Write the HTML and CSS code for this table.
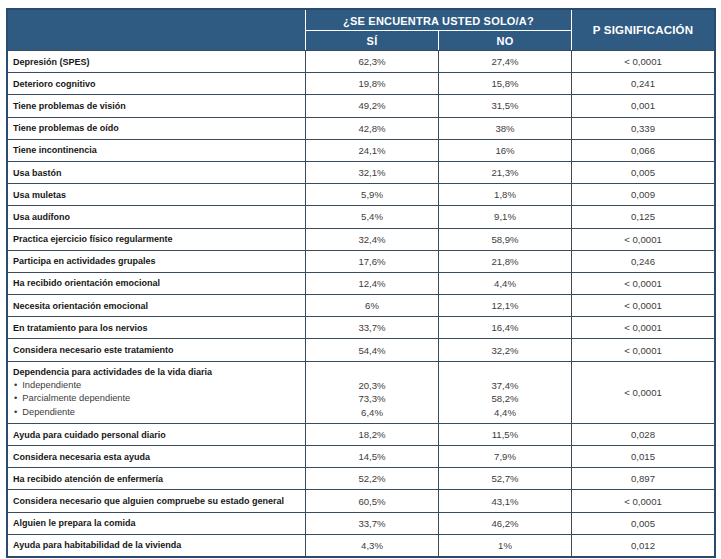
FILE: index.html
```html
<!DOCTYPE html>
<html lang="es">
<head>
<meta charset="utf-8">
<title>¿Se encuentra usted solo/a?</title>
<link rel="stylesheet" href="styles.css">
</head>
<body>
<div class="table">
  <div class="head">
    <div class="h-blank"></div>
    <div class="h-group">¿SE ENCUENTRA USTED SOLO/A?</div>
    <div class="h-p">P SIGNIFICACIÓN</div>
    <div class="h-si">SÍ</div>
    <div class="h-no">NO</div>
  </div>
  <div class="row"><div class="lbl">Depresión (SPES)</div><div class="val">62,3%</div><div class="val">27,4%</div><div class="val">&lt; 0,0001</div></div>
  <div class="row"><div class="lbl">Deterioro cognitivo</div><div class="val">19,8%</div><div class="val">15,8%</div><div class="val">0,241</div></div>
  <div class="row"><div class="lbl">Tiene problemas de visión</div><div class="val">49,2%</div><div class="val">31,5%</div><div class="val">0,001</div></div>
  <div class="row"><div class="lbl">Tiene problemas de oído</div><div class="val">42,8%</div><div class="val">38%</div><div class="val">0,339</div></div>
  <div class="row"><div class="lbl">Tiene incontinencia</div><div class="val">24,1%</div><div class="val">16%</div><div class="val">0,066</div></div>
  <div class="row"><div class="lbl">Usa bastón</div><div class="val">32,1%</div><div class="val">21,3%</div><div class="val">0,005</div></div>
  <div class="row"><div class="lbl">Usa muletas</div><div class="val">5,9%</div><div class="val">1,8%</div><div class="val">0,009</div></div>
  <div class="row"><div class="lbl">Usa audífono</div><div class="val">5,4%</div><div class="val">9,1%</div><div class="val">0,125</div></div>
  <div class="row"><div class="lbl">Practica ejercicio físico regularmente</div><div class="val">32,4%</div><div class="val">58,9%</div><div class="val">&lt; 0,0001</div></div>
  <div class="row"><div class="lbl">Participa en actividades grupales</div><div class="val">17,6%</div><div class="val">21,8%</div><div class="val">0,246</div></div>
  <div class="row"><div class="lbl">Ha recibido orientación emocional</div><div class="val">12,4%</div><div class="val">4,4%</div><div class="val">&lt; 0,0001</div></div>
  <div class="row"><div class="lbl">Necesita orientación emocional</div><div class="val">6%</div><div class="val">12,1%</div><div class="val">&lt; 0,0001</div></div>
  <div class="row"><div class="lbl">En tratamiento para los nervios</div><div class="val">33,7%</div><div class="val">16,4%</div><div class="val">&lt; 0,0001</div></div>
  <div class="row"><div class="lbl">Considera necesario este tratamiento</div><div class="val">54,4%</div><div class="val">32,2%</div><div class="val">&lt; 0,0001</div></div>
  <div class="row tall">
    <div class="lbl stack">
      <span>Dependencia para actividades de la vida diaria</span>
      <ul class="bullets">
        <li>Independiente</li>
        <li>Parcialmente dependiente</li>
        <li>Dependiente</li>
      </ul>
    </div>
    <div class="val stack"><span>&nbsp;</span><span>20,3%</span><span>73,3%</span><span>6,4%</span></div>
    <div class="val stack"><span>&nbsp;</span><span>37,4%</span><span>58,2%</span><span>4,4%</span></div>
    <div class="val">&lt; 0,0001</div>
  </div>
  <div class="row"><div class="lbl">Ayuda para cuidado personal diario</div><div class="val">18,2%</div><div class="val">11,5%</div><div class="val">0,028</div></div>
  <div class="row"><div class="lbl">Considera necesaria esta ayuda</div><div class="val">14,5%</div><div class="val">7,9%</div><div class="val">0,015</div></div>
  <div class="row"><div class="lbl">Ha recibido atención de enfermería</div><div class="val">52,2%</div><div class="val">52,7%</div><div class="val">0,897</div></div>
  <div class="row"><div class="lbl">Considera necesario que alguien compruebe su estado general</div><div class="val">60,5%</div><div class="val">43,1%</div><div class="val">&lt; 0,0001</div></div>
  <div class="row"><div class="lbl">Alguien le prepara la comida</div><div class="val">33,7%</div><div class="val">46,2%</div><div class="val">0,005</div></div>
  <div class="row"><div class="lbl">Ayuda para habitabilidad de la vivienda</div><div class="val">4,3%</div><div class="val">1%</div><div class="val">0,012</div></div>
</div>
</body>
</html>
```

FILE: styles.css
```css
* { box-sizing: border-box; }

html, body {
  margin: 0;
  padding: 0;
  background: #ffffff;
}

body {
  padding: 8px 0 0 6px;
  font-family: "Liberation Sans", Arial, sans-serif;
}

.table {
  width: 710px;
  border: 2px solid #2a4b6e;
  background: #ffffff;
}

.head {
  display: grid;
  grid-template-columns: 298px 133px 133px 142px;
  grid-template-rows: 21px 19px;
  background: #2f5a82;
  color: #ffffff;
  font-weight: bold;
  font-size: 11px;
  letter-spacing: 0.2px;
}

.h-blank {
  grid-column: 1;
  grid-row: 1 / span 2;
  border-right: 1px solid #ffffff;
}

.h-group {
  grid-column: 2 / span 2;
  grid-row: 1;
  border-right: 1px solid #ffffff;
  border-bottom: 1px solid #ffffff;
  display: flex;
  align-items: center;
  justify-content: center;
  padding-top: 1px;
}

.h-p {
  grid-column: 4;
  grid-row: 1 / span 2;
  display: flex;
  align-items: center;
  justify-content: center;
  font-size: 11.5px;
  padding-bottom: 1px;
}

.h-si,
.h-no {
  grid-row: 2;
  border-right: 1px solid #ffffff;
  display: flex;
  align-items: center;
  justify-content: center;
}

.h-si { grid-column: 2; }
.h-no { grid-column: 3; }

.row {
  display: grid;
  grid-template-columns: 298px 133px 133px 142px;
  height: 22.2px;
  border-top: 1px solid #3b4b5e;
}

.row.tall {
  height: 62.3px;
}

.row > div {
  border-right: 1px solid #3b4b5e;
  display: flex;
  align-items: center;
}

.row > div:last-child {
  border-right: none;
}

.lbl {
  padding-left: 5px;
  font-size: 9px;
  font-weight: bold;
  color: #161616;
}

.val {
  justify-content: center;
  font-size: 9.6px;
  color: #3c3c3c;
}

.row > .stack {
  flex-direction: column;
  align-items: flex-start;
  justify-content: flex-start;
  padding-top: 4px;
  line-height: 13.3px;
}

.row > .val.stack {
  align-items: center;
}

.bullets {
  list-style: none;
  margin: 0;
  padding: 0 0 0 1px;
  font-weight: normal;
  color: #3c3c3c;
  font-size: 9.3px;
}

.bullets li {
  display: flex;
  gap: 5px;
}

.bullets li::before {
  content: "•";
  color: #3c3c3c;
}
```
